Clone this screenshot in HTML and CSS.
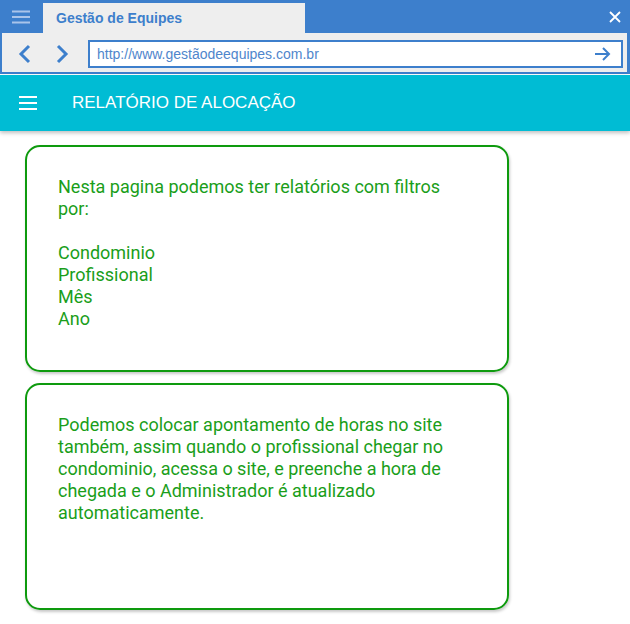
FILE: index.html
```html
<!DOCTYPE html>
<html lang="pt-BR">
<head>
<meta charset="utf-8">
<title>Gestão de Equipes</title>
<link rel="stylesheet" href="styles.css">
</head>
<body>
<div class="browser">
  <div class="titlebar">
    <div class="menu-btn">
      <svg width="18" height="14" viewBox="0 0 18 14"><path d="M0 1.5h18M0 7h18M0 12.5h18" stroke="#a9c4ea" stroke-width="2"/></svg>
    </div>
    <div class="tab">Gestão de Equipes</div>
    <div class="spacer"></div>
    <div class="close-btn">
      <svg width="12" height="12" viewBox="0 0 12 12"><path d="M1 1l10 10M11 1L1 11" stroke="#fff" stroke-width="1.8"/></svg>
    </div>
  </div>
  <div class="navbar">
    <div class="nav-arrows">
      <svg width="14" height="20" viewBox="0 0 14 20"><path d="M11 2L3 10l8 8" fill="none" stroke="#3d7fcc" stroke-width="3"/></svg>
      <svg width="14" height="20" viewBox="0 0 14 20"><path d="M3 2l8 8-8 8" fill="none" stroke="#3d7fcc" stroke-width="3"/></svg>
    </div>
    <div class="address">
      <span class="url">http://www.gestãodeequipes.com.br</span>
      <svg width="16" height="14" viewBox="0 0 16 14"><path d="M0 7h14M8 1l6 6-6 6" fill="none" stroke="#3d7fcc" stroke-width="2"/></svg>
    </div>
  </div>
</div>
<header class="appbar">
  <svg width="18" height="14" viewBox="0 0 18 14"><path d="M0 1h18M0 7h18M0 13h18" stroke="#fff" stroke-width="2"/></svg>
  <h1 class="appbar-title">RELATÓRIO DE ALOCAÇÃO</h1>
</header>
<main class="content">
  <section class="card">
    <p>Nesta pagina podemos ter relatórios com filtros por:</p>
    <p class="list">Condominio<br>Profissional<br>Mês<br>Ano</p>
  </section>
  <section class="card">
    <p>Podemos colocar apontamento de horas no site também, assim quando o profissional chegar no condominio, acessa o site, e preenche a hora de chegada e o Administrador é atualizado automaticamente.</p>
  </section>
</main>
</body>
</html>
```
FILE: styles.css
```css
* { box-sizing: border-box; }
html, body { margin: 0; padding: 0; background: #fff; }
body { width: 630px; height: 624px; overflow: hidden; font-family: "Liberation Sans", Arial, sans-serif; }

.browser { background: #3d7fcc; }
.titlebar { display: flex; align-items: flex-end; height: 33px; }
.menu-btn { width: 43px; height: 33px; display: flex; align-items: center; justify-content: center; padding-right: 2px; }
.tab {
  width: 262px; height: 30px; background: #eeeeee; color: #3d7fcc;
  font-weight: bold; font-size: 14px; line-height: 30px; padding-left: 13px;
}
.spacer { flex: 1; }
.close-btn { width: 21px; height: 33px; display: flex; align-items: center; justify-content: flex-start; }

.navbar {
  display: flex; align-items: flex-start; height: 39px;
  background: #eeeeee; margin: 0 3px 0 2px; padding: 7px 4px 0 0;
}
.nav-arrows { width: 86px; height: 28px; display: flex; align-items: center; gap: 23px; padding-left: 16px; }
.address {
  flex: 1; height: 28px; background: #fff; border: 2px solid #3d7fcc;
  display: flex; align-items: center; justify-content: space-between; padding: 0 10px 0 7px;
}
.url { color: #4f86cc; font-size: 14px; }
.browser::after { content: ""; display: block; height: 1px; background: #fff; margin-top: 2px; }

.appbar {
  height: 56px; background: #00bcd4; display: flex; align-items: center;
  padding-left: 19px; box-shadow: 0 2px 4px rgba(0,0,0,0.25); position: relative;
}
.appbar-title {
  margin: 0 0 0 35px; font-weight: normal; font-size: 17px; color: #fff;
  font-family: "Liberation Sans", Arial, sans-serif;
}

.content { padding: 14px 0 0 25px; display: flex; flex-direction: column; gap: 11px; }
.card {
  width: 484px; height: 227px; border: 2px solid #0e9a0e; border-radius: 15px;
  box-shadow: 1px 2px 3px rgba(0,0,0,0.22); padding: 29px 48px 0 31px;
  font-family: Roboto, "Noto Sans", sans-serif; font-size: 18px; line-height: 22px; color: #1a9e1a;
}
.card p { margin: 0; }
.card .list { margin-top: 22px; }
```
